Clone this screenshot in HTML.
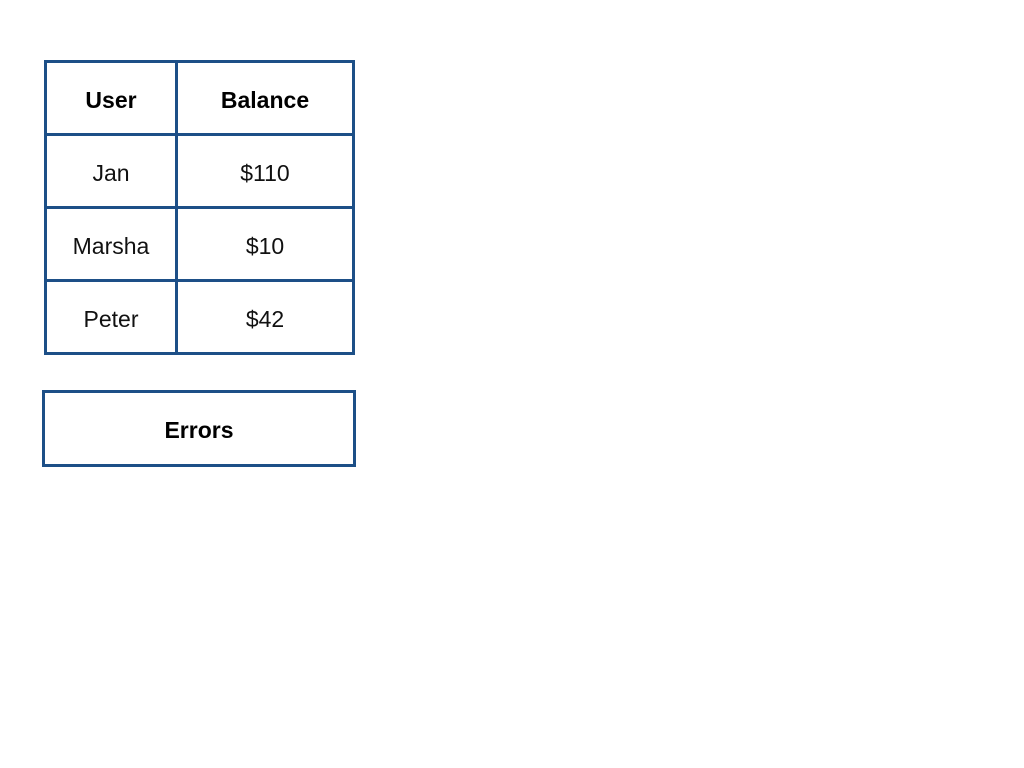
<!DOCTYPE html>
<html><head><style>
body{margin:0;width:1024px;height:768px;background:#fff;position:relative;font-family:"Liberation Sans",Arial,sans-serif;overflow:hidden}
.l{position:absolute;background:#1d4f87}
.t{position:absolute;text-align:center;font-size:23px;color:#111;line-height:30px}
.b{font-weight:bold;color:#000}
</style></head><body>
<div class="l" style="left:44px;top:60px;width:311px;height:3px"></div>
<div class="l" style="left:44px;top:133px;width:311px;height:3px"></div>
<div class="l" style="left:44px;top:206px;width:311px;height:3px"></div>
<div class="l" style="left:44px;top:279px;width:311px;height:3px"></div>
<div class="l" style="left:44px;top:352px;width:311px;height:3px"></div>
<div class="l" style="left:44px;top:60px;width:3px;height:295px"></div>
<div class="l" style="left:175px;top:60px;width:3px;height:295px"></div>
<div class="l" style="left:352px;top:60px;width:3px;height:295px"></div>
<div class="t b" style="left:46px;width:130px;top:85px">User</div>
<div class="t b" style="left:177px;width:176px;top:85px">Balance</div>
<div class="t" style="left:46px;width:130px;top:158px">Jan</div>
<div class="t" style="left:177px;width:176px;top:158px">$110</div>
<div class="t" style="left:46px;width:130px;top:231px">Marsha</div>
<div class="t" style="left:177px;width:176px;top:231px">$10</div>
<div class="t" style="left:46px;width:130px;top:304px">Peter</div>
<div class="t" style="left:177px;width:176px;top:304px">$42</div>
<div style="position:absolute;left:42px;top:390px;width:308px;height:71px;border:3px solid #1d4f87"></div>
<div class="t b" style="left:42px;width:314px;top:415px">Errors</div>
</body></html>
